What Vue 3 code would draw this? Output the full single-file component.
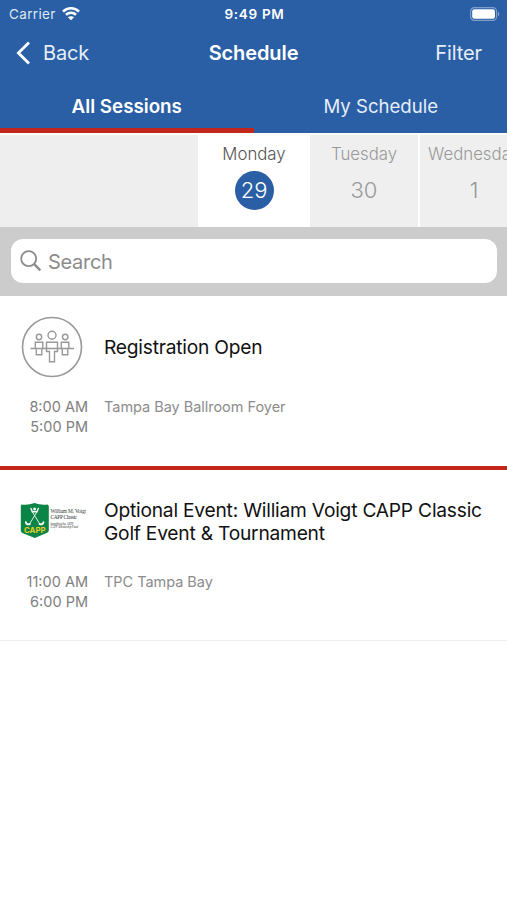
<template>
  <div class="screen">
    <header class="header">
      <div class="status">
        <div class="status__carrier">
          <span class="status__name">Carrier</span>
          <svg class="status__wifi" viewBox="0 0 18 14" width="18" height="14">
            <path d="M1 4.6C5.5 0.2 12.5 0.2 17 4.6M4 7.8C6.8 5.1 11.2 5.1 14 7.8" fill="none" stroke="#fff" stroke-width="2.6" />
            <path d="M9 13.2L5.9 10.3C7.6 8.8 10.4 8.8 12.1 10.3Z" fill="#fff" />
          </svg>
        </div>
        <span class="status__time">9:49 PM</span>
        <svg class="status__battery" viewBox="0 0 30 14" width="30" height="14">
          <rect x="0.6" y="0.6" width="26" height="12.8" rx="3.8" fill="none" stroke="#7f9fcb" stroke-width="1.2" />
          <rect x="2.2" y="2.2" width="22.8" height="9.6" rx="2.2" fill="#fff" />
          <path d="M28 4.8C29.7 5.6 29.7 8.4 28 9.2Z" fill="#8ba8d0" />
        </svg>
      </div>

      <nav class="nav">
        <button class="nav__back">
          <svg viewBox="0 0 16 24" width="16" height="24">
            <path d="M14 1.5L3.4 12L14 22.5" fill="none" stroke="#fff" stroke-width="2.8" />
          </svg>
          <span>Back</span>
        </button>
        <h1 class="nav__title">Schedule</h1>
        <button class="nav__filter">Filter</button>
      </nav>

      <div class="tabs">
        <button
          v-for="tab in tabs"
          :key="tab"
          class="tab"
          :class="{ 'tab--active': tab === activeTab }"
          @click="activeTab = tab"
        >
          <span>{{ tab }}</span>
        </button>
      </div>
    </header>

    <div class="days">
      <div class="days__blank"></div>
      <button
        v-for="day in days"
        :key="day.date"
        class="day"
        :class="{ 'day--active': day.date === activeDay }"
        @click="activeDay = day.date"
      >
        <span class="day__name">{{ day.name }}</span>
        <span class="day__date">{{ day.date }}</span>
      </button>
    </div>

    <div class="search">
      <label class="search__box">
        <svg viewBox="0 0 22 22" width="22" height="22">
          <circle cx="8.7" cy="8.7" r="7.5" fill="none" stroke="#8c8c8c" stroke-width="1.8" />
          <path d="M14.2 14.2L20.3 20.3" stroke="#8c8c8c" stroke-width="2.4" />
        </svg>
        <input v-model="query" class="search__input" type="text" placeholder="Search" />
      </label>
    </div>

    <main>
      <article
        v-for="session in sessions"
        :key="session.id"
        class="session"
        :class="`session--${session.id}`"
      >
        <div class="session__media">
          <svg v-if="session.id === 'registration'" viewBox="0 0 62 62" width="62" height="62">
            <g fill="none" stroke="#999" stroke-width="1.4">
              <circle cx="31" cy="31" r="29.5" stroke-width="1.6" />
              <circle cx="31" cy="19.3" r="4" />
              <circle cx="18" cy="21" r="2.7" />
              <circle cx="44.2" cy="21" r="2.7" />
              <path d="M25.5 32V26.3H36.5V32M14.3 32V26.3H21.8V32M40.3 32V26.3H47.8V32" />
              <path d="M9.5 32.5H53" />
              <path d="M25.5 33V35.5H28.5V45.7H33.5V35.5H36.5V33M15.3 33V38.7H20.8V33M41.3 33V38.7H46.8V33" />
            </g>
          </svg>
          <svg v-else viewBox="0 0 68 38" width="68" height="38">
            <path d="M1.5 2.5Q8 3.5 14.5 1Q21 3.5 27.8 2.5L28.8 4V28.5Q28.8 30.5 26 31.3L14.8 36L3 31.3Q0.8 30.5 0.8 28.5V4Z" fill="#0b8545" />
            <g fill="none" stroke="#f4faf5" stroke-linecap="round">
              <path d="M11 6.5L12.3 9.8L17 9.8L18.3 6.5" stroke-width="1.4" />
              <path d="M12.3 9.8L19.5 21.5M17 9.8L9.8 21.5" stroke-width="0.9" />
              <path d="M19.5 22Q23 23 23.4 20.3M9.8 22Q6.3 23 5.9 20.3" stroke-width="1.9" />
            </g>
            <circle cx="14.6" cy="7" r="1.5" fill="#fff" />
            <text x="4" y="30.6" textLength="21.5" lengthAdjust="spacingAndGlyphs" class="logo-name">CAPP</text>
            <g class="logo-text">
              <text x="30.5" y="10.8" textLength="35.5">William M. Voigt</text>
              <text x="30.5" y="17.3" textLength="26.5">CAPP Classic</text>
              <text x="30.5" y="22.6" textLength="23" class="logo-small">benefiting the ASHP</text>
              <text x="30.5" y="26.3" textLength="27.5" class="logo-small">CAPP Scholarship Fund</text>
            </g>
          </svg>
        </div>
        <h2 class="session__title">{{ session.title }}</h2>
        <div class="session__time">
          <div>{{ session.start }}</div>
          <div>{{ session.end }}</div>
        </div>
        <div class="session__place">{{ session.place }}</div>
      </article>
    </main>
  </div>
</template>

<script setup>
import { ref } from 'vue'

const tabs = ['All Sessions', 'My Schedule']
const activeTab = ref('All Sessions')

const days = [
  { name: 'Monday', date: 29 },
  { name: 'Tuesday', date: 30 },
  { name: 'Wednesday', date: 1 },
]
const activeDay = ref(29)
const query = ref('')

const sessions = [
  {
    id: 'registration',
    title: 'Registration Open',
    start: '8:00 AM',
    end: '5:00 PM',
    place: 'Tampa Bay Ballroom Foyer',
  },
  {
    id: 'golf',
    title: 'Optional Event: William Voigt CAPP Classic Golf Event & Tournament',
    start: '11:00 AM',
    end: '6:00 PM',
    place: 'TPC Tampa Bay',
  },
]
</script>

<style>
body {
  background: #fff;
}
</style>

<style scoped>
.screen {
  width: 100%;
  height: 900px;
  overflow: hidden;
  background: #fff;
  font-family: Inter, "Liberation Sans", sans-serif;
}

button {
  padding: 0;
  border: 0;
  background: none;
  font: inherit;
  color: inherit;
}

svg {
  display: block;
  flex: none;
}

.header {
  background: #2a5fa5;
  color: #fff;
}

.status {
  display: grid;
  grid-template-columns: 1fr auto 1fr;
  align-items: center;
  height: 27px;
  padding: 0 7px 0 9px;
  font-size: 13.5px;
}

.status__carrier {
  display: flex;
  align-items: center;
  gap: 6px;
  color: #dfe8f4;
}

.status__name {
  letter-spacing: 0.35px;
}

.status__time {
  font-size: 13.5px;
  font-weight: 600;
  letter-spacing: 0.7px;
}

.status__battery {
  justify-self: end;
}

.nav {
  display: grid;
  grid-template-columns: 1fr auto 1fr;
  align-items: center;
  height: 51px;
  padding: 0 25px 0 15px;
  font-size: 20px;
}

.nav__back {
  display: flex;
  align-items: center;
  gap: 12px;
  color: #e6eefa;
  letter-spacing: -0.2px;
}

.nav__title {
  margin: 0 0 0 10px;
  font-size: 20px;
  font-weight: 600;
  letter-spacing: -0.1px;
}

.nav__filter {
  justify-self: end;
  color: #e6eefa;
  letter-spacing: -0.1px;
}

.tabs {
  display: grid;
  grid-template-columns: 1fr 1fr;
  height: 55px;
}

.tab {
  padding: 6px 0 0 1px;
  border-bottom: 5px solid transparent;
  font-size: 18.6px;
  color: #e6eefa;
}

.tab--active {
  padding-left: 0;
  border-bottom-color: #c3261a;
  font-size: 18.8px;
  font-weight: 600;
  color: #fff;
}

.days {
  display: flex;
  gap: 2px;
  height: 94px;
  padding-top: 2px;
  box-sizing: border-box;
  background: #fff;
}

.days__blank {
  flex: none;
  width: 198px;
  background: #eee;
}

.day {
  display: flex;
  flex: none;
  flex-direction: column;
  align-items: center;
  width: 108px;
  padding-top: 8px;
  background: #efefef;
  color: #999;
}

.day__name {
  font-size: 16.8px;
  font-weight: 300;
  line-height: 23px;
}

.day__date {
  width: 39px;
  height: 39px;
  margin-top: 5px;
  border-radius: 50%;
  font-size: 22px;
  font-weight: 300;
  line-height: 39px;
}

.day--active {
  background: #fff;
  color: #555;
}

.day--active .day__date {
  background: #2a5fa5;
  color: #fff;
}

.search {
  height: 69px;
  padding: 12px 10px 13px 11px;
  box-sizing: border-box;
  background: #ccc;
}

.search__box {
  display: flex;
  align-items: center;
  gap: 6px;
  height: 44px;
  padding-left: 9px;
  border-radius: 12px;
  background: #fff;
}

.search__input {
  width: 300px;
  padding: 2px 0 0;
  border: 0;
  outline: 0;
  background: none;
  font: inherit;
  font-size: 20px;
  letter-spacing: -0.3px;
}

.search__input::placeholder {
  color: #8c8c8c;
}

.session {
  display: grid;
  grid-template-columns: 88px 1fr;
  grid-template-rows: 101px 1fr;
  column-gap: 16px;
  height: 170px;
  color: #8c8c8c;
}

.session__media {
  display: flex;
  align-items: center;
  justify-content: flex-end;
}

.session__title {
  align-self: center;
  margin: 0;
  padding: 1px 16px 0 0;
  font-size: 19.2px;
  font-weight: 400;
  letter-spacing: -0.22px;
  line-height: 23px;
  color: #111;
}

.session__time,
.session__place {
  font-size: 14.5px;
  line-height: 20px;
}

.session__time {
  text-align: right;
  color: #808080;
}

.session__place {
  letter-spacing: -0.03px;
}

.session--registration {
  border-bottom: 4px solid #c3261a;
}

.session--registration .session__media {
  padding-right: 5px;
}

.session--golf {
  grid-template-rows: 102px 1fr;
  border-bottom: 1px solid #eee;
}

.session--golf .session__title {
  padding-top: 2px;
}

.logo-name {
  font-family: Inter, sans-serif;
  font-size: 7.2px;
  font-weight: 700;
  fill: #e6cf26;
}

.logo-text {
  font-family: "Liberation Serif", serif;
  font-size: 5.4px;
  fill: #333;
}

.logo-small {
  font-size: 3px;
  font-style: italic;
}
</style>
